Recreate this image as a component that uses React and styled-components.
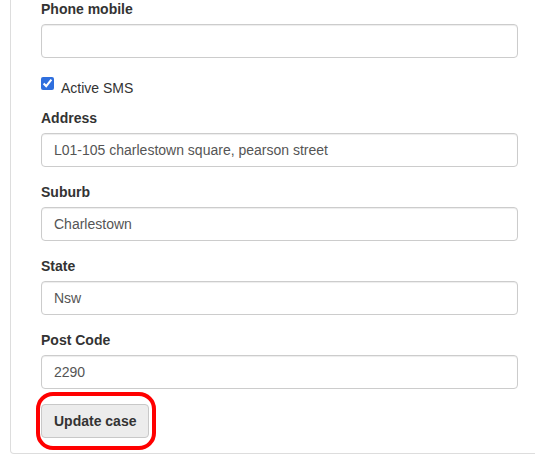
import styled, { createGlobalStyle } from "styled-components";

const GlobalStyle = createGlobalStyle`
	html, body {
		margin: 0;
		padding: 0;
		background: #fff;
		overflow: hidden;
	}
	body {
		font-family: "Liberation Sans", Arial, sans-serif;
		font-size: 14px;
		line-height: 20px;
		color: #333;
	}
	* {
		box-sizing: border-box;
	}
`;

const fields = [
	{ id: "address", label: "Address", value: "L01-105 charlestown square, pearson street" },
	{ id: "suburb", label: "Suburb", value: "Charlestown" },
	{ id: "state", label: "State", value: "Nsw" },
	{ id: "postcode", label: "Post Code", value: "2290" },
];

function App() {
	return (
		<>
			<GlobalStyle />
			<Panel>
				<Form onSubmit={(e) => e.preventDefault()}>
					<FormGroup>
						<Label htmlFor='phone'>Phone mobile</Label>
						<Input id='phone' type='text' defaultValue='' />
					</FormGroup>

					<CheckRow>
						<CheckLabel>
							<Check type='checkbox' defaultChecked />
							Active SMS
						</CheckLabel>
					</CheckRow>

					{fields.map((field) => (
						<FormGroup key={field.id}>
							<Label htmlFor={field.id}>{field.label}</Label>
							<Input id={field.id} type='text' defaultValue={field.value} />
						</FormGroup>
					))}

					<ButtonWrap>
						<Button type='submit'>Update case</Button>
						<Highlight />
					</ButtonWrap>
				</Form>
			</Panel>
		</>
	);
}

export default App;

const Panel = styled.div`
	margin: -1px 0 0 10px;
	width: 560px;
	border: 1px solid #ddd;
	border-top: none;
	border-radius: 0 0 4px 4px;
	padding: 0 0 15px 30px;
`;

const Form = styled.form`
	width: 477px;
`;

const FormGroup = styled.div`
	margin-bottom: 15px;
`;

const Label = styled.label`
	display: inline-block;
	max-width: 100%;
	margin-bottom: 5px;
	font-weight: 700;
	color: #333;
`;

const Input = styled.input`
	display: block;
	width: 100%;
	height: 34px;
	padding: 6px 12px;
	font-family: "Liberation Sans", Arial, sans-serif;
	font-size: 14px;
	line-height: 20px;
	color: #555;
	background: #fff;
	border: 1px solid #ccc;
	border-radius: 4px;
	box-shadow: inset 0 1px 1px rgba(0, 0, 0, 0.075);
	outline: none;
`;

const CheckRow = styled.div`
	position: relative;
	display: block;
	margin-bottom: 10px;
	min-height: 20px;
`;

const CheckLabel = styled.label`
	display: block;
	padding: 5px 0 0 20px;
	min-height: 25px;
	font-weight: 400;
	cursor: pointer;
`;

const Check = styled.input`
	position: absolute;
	left: 0;
	top: 0;
	width: 13px;
	height: 13px;
	margin: 4px 0 0;
	accent-color: #2f6fde;
`;

const ButtonWrap = styled.div`
	position: relative;
	display: inline-block;
`;

const Button = styled.button`
	display: block;
	height: 34px;
	padding: 6px 12px;
	font-family: "Liberation Sans", Arial, sans-serif;
	font-size: 14px;
	font-weight: 700;
	line-height: 20px;
	color: #333;
	background: #ececec;
	border: 1px solid #c8c8c8;
	border-radius: 4px;
	cursor: pointer;
`;

const Highlight = styled.span`
	position: absolute;
	left: -5px;
	right: -7px;
	top: -12px;
	bottom: -12px;
	border: 4px solid #f00;
	border-radius: 17px;
	pointer-events: none;
`;
